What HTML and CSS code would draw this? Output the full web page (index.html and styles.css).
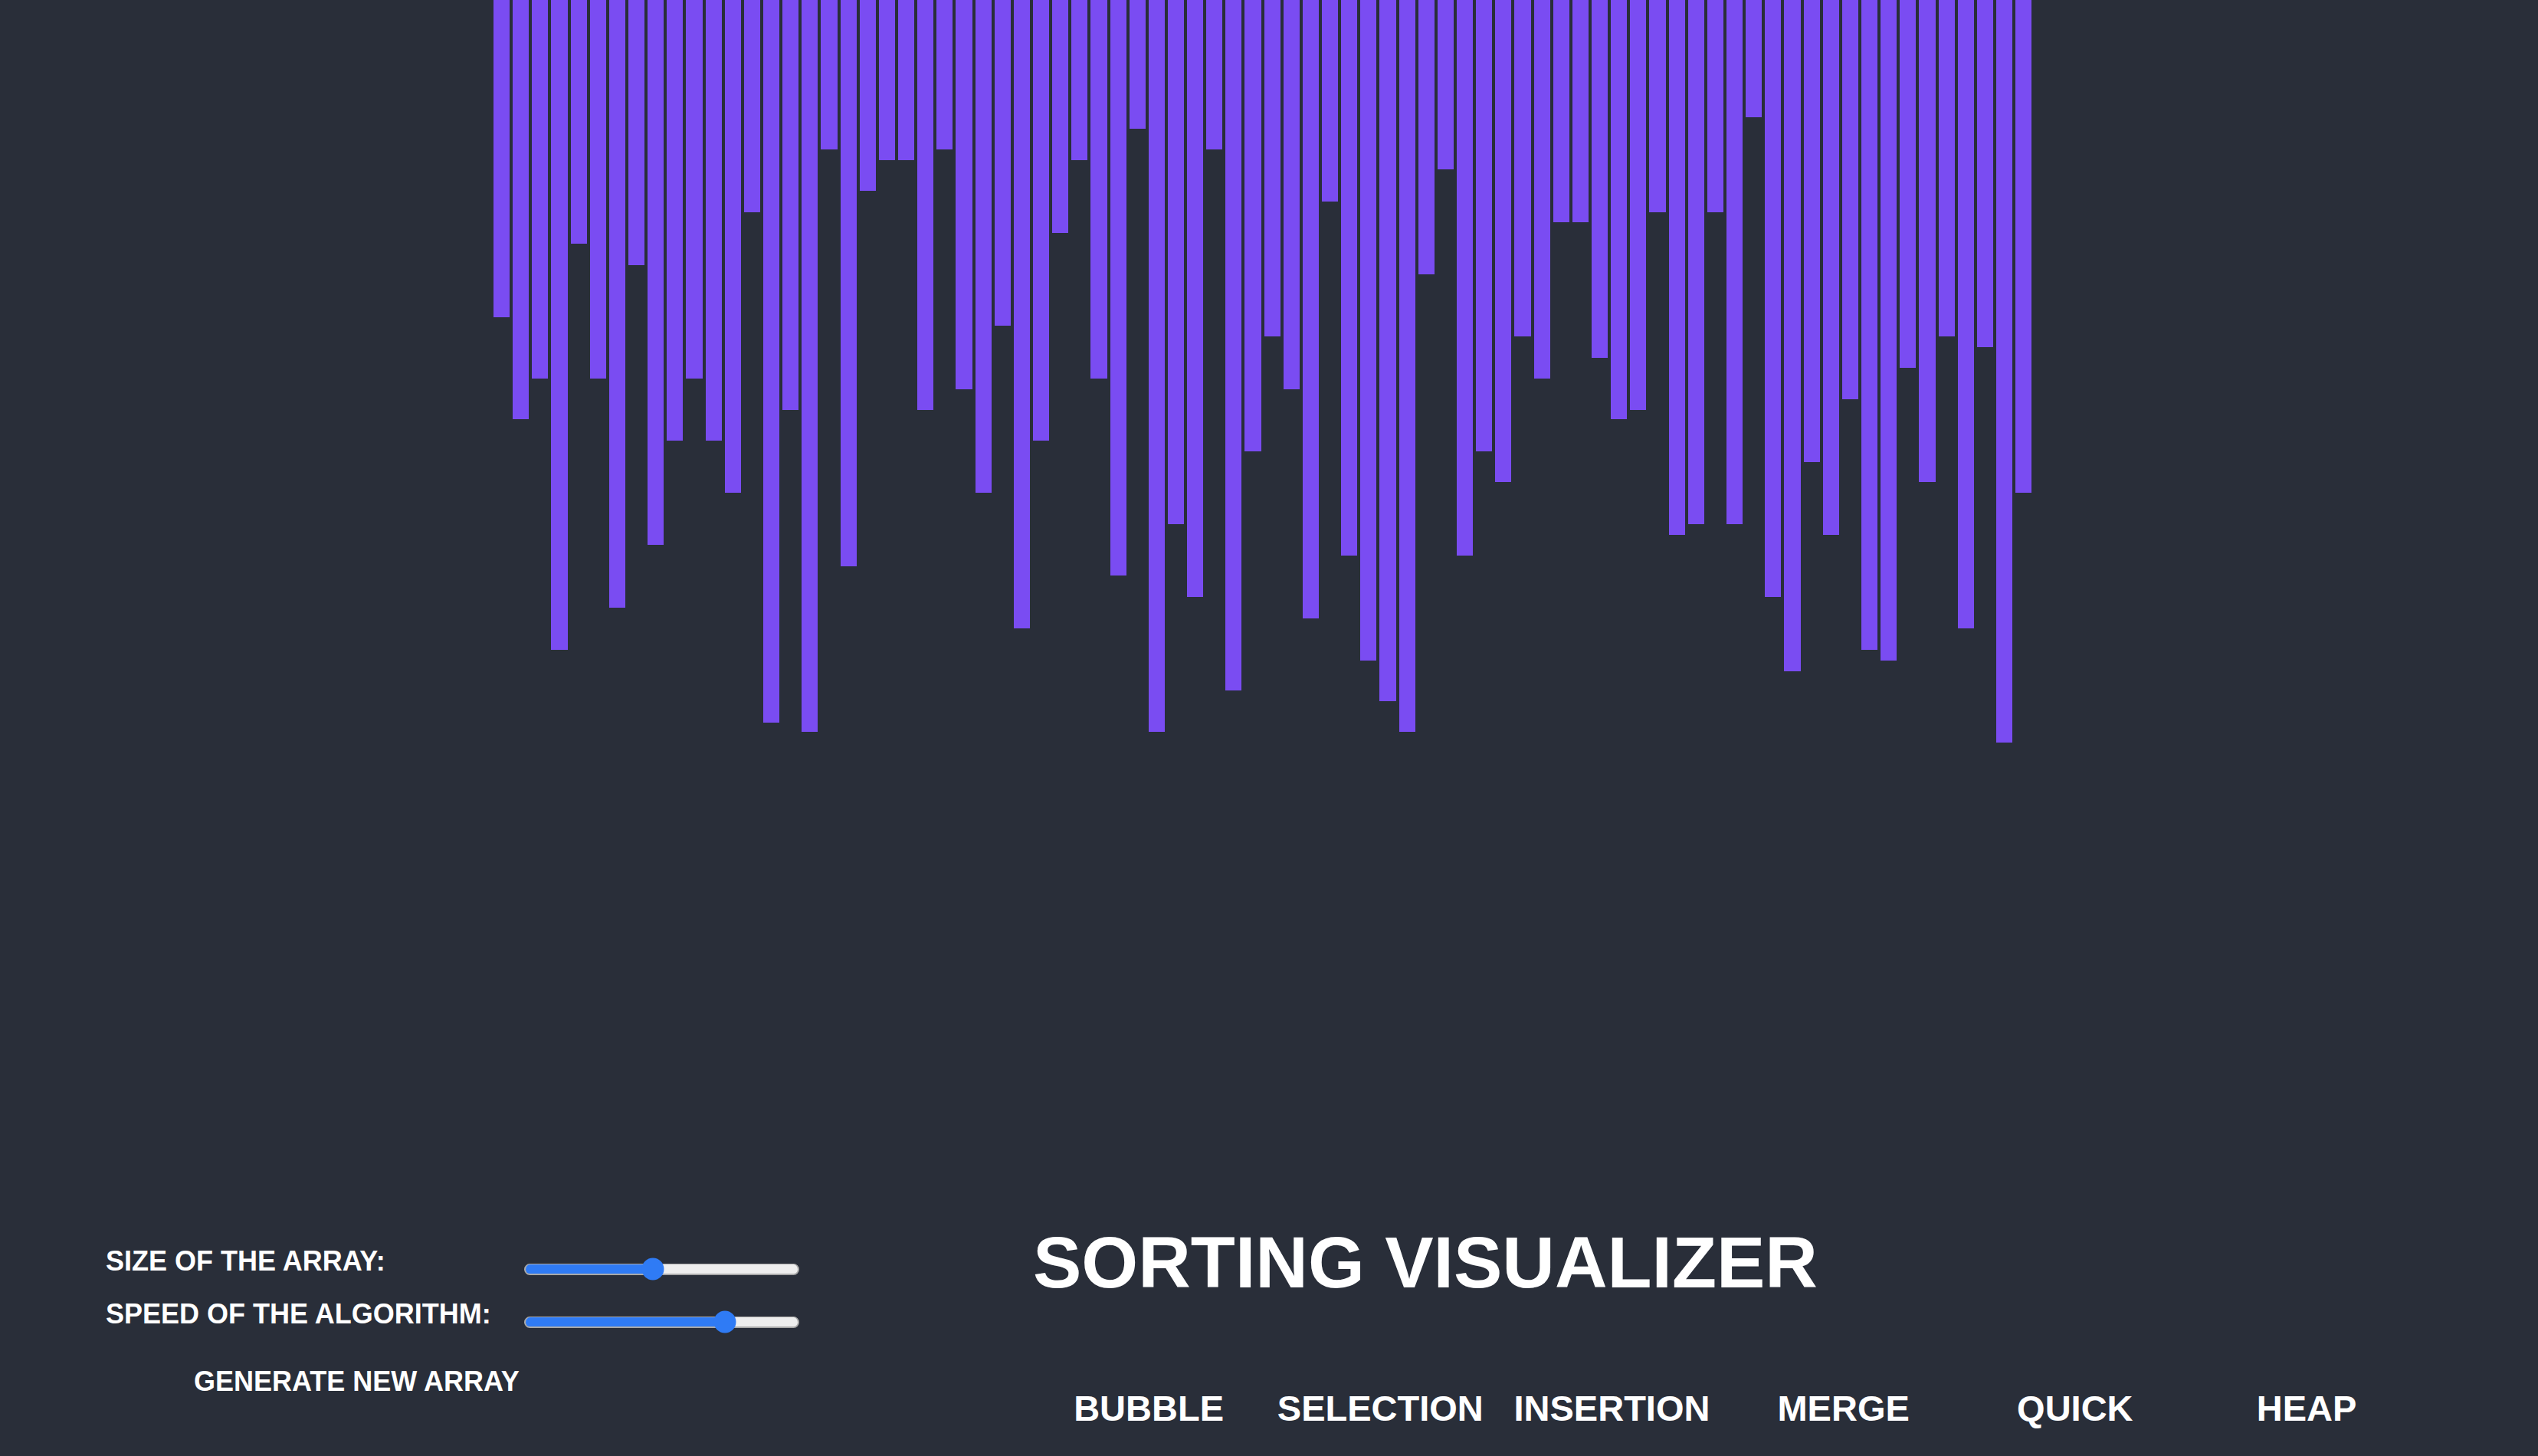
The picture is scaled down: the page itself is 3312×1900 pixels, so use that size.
FILE: index.html
```html
<!DOCTYPE html>
<html lang="en">
<head>
<meta charset="utf-8">
<title>Sorting Visualizer</title>
<link rel="stylesheet" href="styles.css">
</head>
<body>
<div class="app">
  <div class="array-container">
    <div class="array-bar" style="height:414px"></div>
    <div class="array-bar" style="height:547px"></div>
    <div class="array-bar" style="height:494px"></div>
    <div class="array-bar" style="height:848px"></div>
    <div class="array-bar" style="height:318px"></div>
    <div class="array-bar" style="height:494px"></div>
    <div class="array-bar" style="height:793px"></div>
    <div class="array-bar" style="height:346px"></div>
    <div class="array-bar" style="height:711px"></div>
    <div class="array-bar" style="height:575px"></div>
    <div class="array-bar" style="height:494px"></div>
    <div class="array-bar" style="height:575px"></div>
    <div class="array-bar" style="height:643px"></div>
    <div class="array-bar" style="height:277px"></div>
    <div class="array-bar" style="height:943px"></div>
    <div class="array-bar" style="height:535px"></div>
    <div class="array-bar" style="height:955px"></div>
    <div class="array-bar" style="height:195px"></div>
    <div class="array-bar" style="height:739px"></div>
    <div class="array-bar" style="height:249px"></div>
    <div class="array-bar" style="height:209px"></div>
    <div class="array-bar" style="height:209px"></div>
    <div class="array-bar" style="height:535px"></div>
    <div class="array-bar" style="height:195px"></div>
    <div class="array-bar" style="height:508px"></div>
    <div class="array-bar" style="height:643px"></div>
    <div class="array-bar" style="height:425px"></div>
    <div class="array-bar" style="height:820px"></div>
    <div class="array-bar" style="height:575px"></div>
    <div class="array-bar" style="height:304px"></div>
    <div class="array-bar" style="height:209px"></div>
    <div class="array-bar" style="height:494px"></div>
    <div class="array-bar" style="height:751px"></div>
    <div class="array-bar" style="height:168px"></div>
    <div class="array-bar" style="height:955px"></div>
    <div class="array-bar" style="height:684px"></div>
    <div class="array-bar" style="height:779px"></div>
    <div class="array-bar" style="height:195px"></div>
    <div class="array-bar" style="height:901px"></div>
    <div class="array-bar" style="height:589px"></div>
    <div class="array-bar" style="height:439px"></div>
    <div class="array-bar" style="height:508px"></div>
    <div class="array-bar" style="height:807px"></div>
    <div class="array-bar" style="height:263px"></div>
    <div class="array-bar" style="height:725px"></div>
    <div class="array-bar" style="height:862px"></div>
    <div class="array-bar" style="height:915px"></div>
    <div class="array-bar" style="height:955px"></div>
    <div class="array-bar" style="height:358px"></div>
    <div class="array-bar" style="height:221px"></div>
    <div class="array-bar" style="height:725px"></div>
    <div class="array-bar" style="height:589px"></div>
    <div class="array-bar" style="height:629px"></div>
    <div class="array-bar" style="height:439px"></div>
    <div class="array-bar" style="height:494px"></div>
    <div class="array-bar" style="height:290px"></div>
    <div class="array-bar" style="height:290px"></div>
    <div class="array-bar" style="height:467px"></div>
    <div class="array-bar" style="height:547px"></div>
    <div class="array-bar" style="height:535px"></div>
    <div class="array-bar" style="height:277px"></div>
    <div class="array-bar" style="height:698px"></div>
    <div class="array-bar" style="height:684px"></div>
    <div class="array-bar" style="height:277px"></div>
    <div class="array-bar" style="height:684px"></div>
    <div class="array-bar" style="height:153px"></div>
    <div class="array-bar" style="height:779px"></div>
    <div class="array-bar" style="height:876px"></div>
    <div class="array-bar" style="height:603px"></div>
    <div class="array-bar" style="height:698px"></div>
    <div class="array-bar" style="height:521px"></div>
    <div class="array-bar" style="height:848px"></div>
    <div class="array-bar" style="height:862px"></div>
    <div class="array-bar" style="height:480px"></div>
    <div class="array-bar" style="height:629px"></div>
    <div class="array-bar" style="height:439px"></div>
    <div class="array-bar" style="height:820px"></div>
    <div class="array-bar" style="height:453px"></div>
    <div class="array-bar" style="height:969px"></div>
    <div class="array-bar" style="height:643px"></div>
  </div>

  <div class="panel">
    <div class="controls">
      <div class="control-row">
        <label class="control-label">SIZE OF THE ARRAY:</label>
        <div class="slider" style="--pos:46.8%">
          <div class="slider-track">
            <div class="slider-fill"></div>
          </div>
          <div class="slider-thumb"></div>
        </div>
      </div>
      <div class="control-row">
        <label class="control-label">SPEED OF THE ALGORITHM:</label>
        <div class="slider" style="--pos:73%">
          <div class="slider-track">
            <div class="slider-fill"></div>
          </div>
          <div class="slider-thumb"></div>
        </div>
      </div>
      <button class="generate-btn">GENERATE NEW ARRAY</button>
    </div>

    <div class="header">
      <h1 class="title">SORTING VISUALIZER</h1>
      <div class="algorithms">
        <button class="algo-btn">BUBBLE</button>
        <button class="algo-btn">SELECTION</button>
        <button class="algo-btn">INSERTION</button>
        <button class="algo-btn">MERGE</button>
        <button class="algo-btn">QUICK</button>
        <button class="algo-btn">HEAP</button>
      </div>
    </div>
  </div>
</div>
</body>
</html>
```

FILE: styles.css
```css
* {
  box-sizing: border-box;
}

html, body {
  margin: 0;
  padding: 0;
  background: #292e39;
}

body {
  font-family: "Liberation Sans", Arial, Helvetica, sans-serif;
  color: #ffffff;
  overflow: hidden;
}

.app {
  width: 3312px;
  height: 1900px;
  display: flex;
  flex-direction: column;
}

.array-container {
  height: 1590px;
  flex: none;
  display: flex;
  align-items: flex-start;
  gap: 4px;
  margin-left: 644px;
}

.array-bar {
  width: 21.15px;
  flex: none;
  background: #7a4cf2;
}

.panel {
  flex: 1;
  display: flex;
  align-items: flex-start;
}

.controls {
  width: 1348px;
  flex: none;
  padding-left: 138px;
  padding-top: 36px;
  display: flex;
  flex-direction: column;
  align-items: flex-start;
}

.control-row {
  display: flex;
  align-items: center;
  height: 40px;
  margin-bottom: 29px;
}

.control-label {
  width: 546px;
  font-size: 36px;
  line-height: 40px;
  font-weight: 700;
  white-space: nowrap;
}

.slider {
  position: relative;
  width: 359px;
  height: 15px;
  margin-top: 20px;
}

.slider-track {
  width: 100%;
  height: 100%;
  border-radius: 8px;
  background: #eeeeee;
  border: 2px solid #a9a9a9;
  border-top-width: 1.5px;
  overflow: hidden;
  position: relative;
}

.slider-fill {
  width: var(--pos);
  height: 100%;
  background: #2f7bf5;
}

.slider-track::before {
  content: "";
  position: absolute;
  left: -2px;
  top: -2px;
  bottom: -2px;
  width: calc(var(--pos) + 2px);
  border: 2px solid #5478b8;
  border-right: none;
  border-radius: 8px 0 0 8px;
  pointer-events: none;
}

.slider-thumb {
  position: absolute;
  left: var(--pos);
  top: 50%;
  width: 29px;
  height: 29px;
  border-radius: 50%;
  background: #2f7bf5;
  transform: translate(-50%, -50%);
}

.generate-btn {
  margin-top: 19px;
  margin-left: 115px;
  padding: 0;
  border: none;
  background: none;
  color: #ffffff;
  font-family: "Liberation Sans", Arial, Helvetica, sans-serif;
  font-size: 36px;
  line-height: 40px;
  font-weight: 700;
  white-space: nowrap;
  cursor: pointer;
}

.header {
  padding-top: 2px;
  display: flex;
  flex-direction: column;
}

.title {
  margin: 0;
  font-size: 95px;
  line-height: 110px;
  font-weight: 700;
  white-space: nowrap;
}

.algorithms {
  margin-top: 109px;
  display: grid;
  grid-template-columns: repeat(6, 302.2px);
}

.algo-btn {
  padding: 0;
  border: none;
  background: none;
  color: #ffffff;
  font-family: "Liberation Sans", Arial, Helvetica, sans-serif;
  font-size: 47px;
  line-height: 54px;
  font-weight: 700;
  text-align: center;
  white-space: nowrap;
  cursor: pointer;
}
```
